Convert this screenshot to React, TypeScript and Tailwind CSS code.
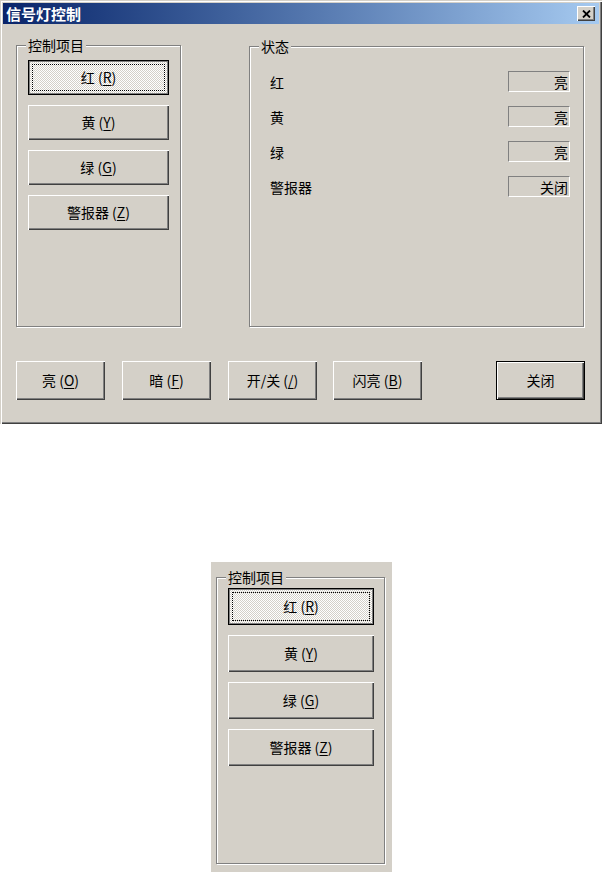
import React from "react";

const raised =
  "bg-[#D4D0C8] shadow-[inset_1px_1px_0_#fff,inset_-1px_-1px_0_#404040,inset_-2px_-2px_0_#808080]";

function Label({ text, k }: { text: string; k?: string }) {
  return (
    <span className="whitespace-pre">
      {text}
      {k ? (
        <>
          {" ("}
          <span className="underline underline-offset-[2px]">{k}</span>
          {")"}
        </>
      ) : null}
    </span>
  );
}

function Btn({
  text,
  k,
  className = "",
}: {
  text: string;
  k?: string;
  className?: string;
}) {
  return (
    <div className={`${raised} flex items-center justify-center ${className}`}>
      <Label text={text} k={k} />
    </div>
  );
}

function FocusBtn({ text, k, className = "" }: { text: string; k?: string; className?: string }) {
  return (
    <div
      className={`flex border border-[#000] shadow-[inset_1px_1px_0_#808080,inset_-1px_-1px_0_#808080] p-[3px] bg-[image:repeating-conic-gradient(#ffffff_0%_25%,#d4d0c8_0%_50%)] bg-[length:2px_2px] ${className}`}
    >
      <div className="flex-1 flex items-center justify-center border border-dotted border-[#000]">
        <Label text={text} k={k} />
      </div>
    </div>
  );
}

function Group({
  title,
  className = "",
  children,
}: {
  title: string;
  className?: string;
  children?: React.ReactNode;
}) {
  return (
    <div
      className={`relative border border-[#808080] shadow-[inset_1px_1px_0_#fff,1px_1px_0_#fff] ${className}`}
    >
      <div className="absolute left-[9px] -top-[10px] bg-[#D4D0C8] px-[2px] leading-[18px]">
        {title}
      </div>
      {children}
    </div>
  );
}

function ControlGroup({ big = false }: { big?: boolean }) {
  return (
    <Group
      title="控制项目"
      className={big ? "w-[169px] h-[287px]" : "w-[165px] h-[282px]"}
    >
      <div
        className={
          big
            ? "flex flex-col gap-[10px] pt-[10px] pl-[11px]"
            : "flex flex-col gap-[10px] pt-[14px] pl-[11px]"
        }
      >
        <FocusBtn text="红" k="R" className={big ? "w-[146px] h-[37px]" : "w-[141px] h-[35px]"} />
        <Btn text="黄" k="Y" className={big ? "w-[146px] h-[37px]" : "w-[141px] h-[35px]"} />
        <Btn text="绿" k="G" className={big ? "w-[146px] h-[37px]" : "w-[141px] h-[35px]"} />
        <Btn text="警报器" k="Z" className={big ? "w-[146px] h-[37px]" : "w-[141px] h-[35px]"} />
      </div>
    </Group>
  );
}

function StatusRow({ label, value }: { label: string; value: string }) {
  return (
    <div className="flex items-center justify-between h-[21px]">
      <span className="leading-none">{label}</span>
      <div className="w-[62px] h-[21px] border border-t-[#808080] border-l-[#808080] border-b-white border-r-white flex items-center justify-end pr-[1px] leading-none">
        {value}
      </div>
    </div>
  );
}

export default function App() {
  return (
    <div className="w-[602px] h-[872px] bg-white text-[14px] text-black font-['Noto_Sans_CJK_SC','Noto_Sans_CJK_JP',sans-serif] overflow-hidden">
      {/* Dialog */}
      <div className="w-[602px] h-[424px] bg-[#D4D0C8] p-[3px] flex flex-col shadow-[inset_1px_1px_0_#D4D0C8,inset_2px_2px_0_#fff,inset_-1px_-1px_0_#404040,inset_-2px_-2px_0_#808080]">
        {/* Title bar */}
        <div className="h-[21px] flex items-center justify-between pl-[3px] pr-[4px] bg-gradient-to-r from-[#0A246A] to-[#A6CAF0]">
          <span className="text-white font-bold text-[15px] leading-none">信号灯控制</span>
          <div className={`${raised} w-[18px] h-[15px] flex items-center justify-center`}>
            <svg width="9" height="8" viewBox="0 0 9 8">
              <path d="M1 0.5 L8 7.5 M8 0.5 L1 7.5" stroke="#000" strokeWidth="1.8" />
            </svg>
          </div>
        </div>
        {/* Content */}
        <div className="flex flex-col">
          <div className="flex pl-[13px] pt-[21px]">
            <ControlGroup />
            <Group title="状态" className="ml-[68px] mt-[1px] w-[335px] h-[281px]">
              <div className="flex flex-col gap-[14px] pt-[24px] pl-[20px] pr-[13px]">
                <StatusRow label="红" value="亮" />
                <StatusRow label="黄" value="亮" />
                <StatusRow label="绿" value="亮" />
                <StatusRow label="警报器" value="关闭" />
              </div>
            </Group>
          </div>
          <div className="flex pl-[13px] mt-[34px]">
            <Btn text="亮" k="O" className="w-[89px] h-[39px]" />
            <Btn text="暗" k="F" className="w-[89px] h-[39px] ml-[17px]" />
            <Btn text="开/关" k="/" className="w-[89px] h-[39px] ml-[17px]" />
            <Btn text="闪亮" k="B" className="w-[89px] h-[39px] ml-[16px]" />
            <div className="ml-[74px] w-[89px] h-[39px] border border-black flex">
              <Btn text="关闭" className="flex-1" />
            </div>
          </div>
        </div>
      </div>

      {/* Cropped enlarged group box */}
      <div className="ml-[211px] mt-[138px] w-[181px] h-[310px] bg-[#D4D0C8] pl-[5px] pt-[15px]">
        <ControlGroup big />
      </div>
    </div>
  );
}
